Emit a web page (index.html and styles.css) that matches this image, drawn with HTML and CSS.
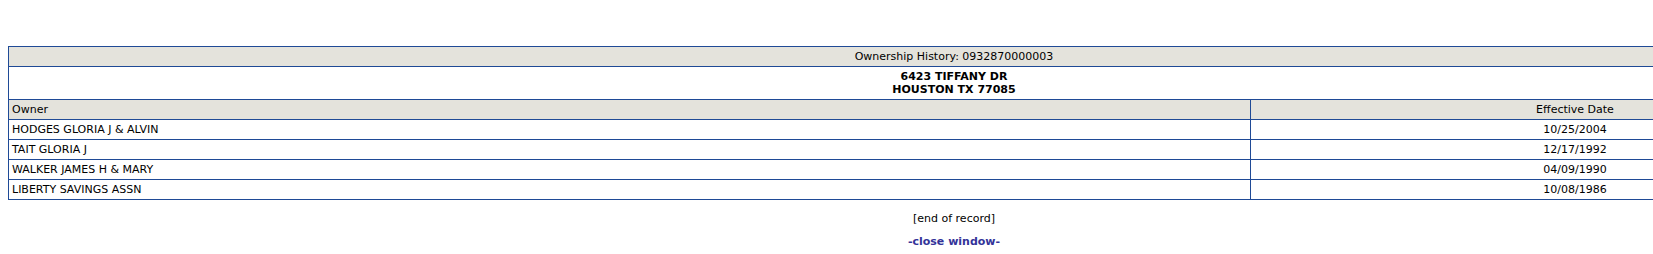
FILE: index.html
```html
<!DOCTYPE html>
<html>
<head>
<meta charset="utf-8">
<link rel="stylesheet" href="styles.css">
</head>
<body>
<div class="viewport">
<div class="page">
  <div class="spacer"></div>
  <table class="history">
    <tr><td colspan="2" class="title">Ownership History: 0932870000003</td></tr>
    <tr><td colspan="2" class="address">6423 TIFFANY DR<br>HOUSTON TX 77085</td></tr>
    <tr class="head"><td class="owner">Owner</td><td class="date">Effective Date</td></tr>
    <tr><td class="owner">HODGES GLORIA J &amp; ALVIN</td><td class="date">10/25/2004</td></tr>
    <tr><td class="owner">TAIT GLORIA J</td><td class="date">12/17/1992</td></tr>
    <tr><td class="owner">WALKER JAMES H &amp; MARY</td><td class="date">04/09/1990</td></tr>
    <tr><td class="owner">LIBERTY SAVINGS ASSN</td><td class="date">10/08/1986</td></tr>
  </table>
  <p class="end">[end of record]</p>
  <p class="close"><a href="#">-close window-</a></p>
</div>
</div>
</body>
</html>
```
FILE: styles.css
```css
html {
  overflow: hidden;
}
body {
  margin: 8px 0 8px 8px;
  font-family: "DejaVu Sans", Verdana, sans-serif;
  font-size: 11px;
  color: #000;
  background: #fff;
}
.viewport {
  width: calc(100vw - 8px);
  overflow: hidden;
}
.page {
  width: 1892px;
}
.spacer {
  height: 38px;
}
.history {
  width: 1892px;
  border-collapse: collapse;
}
.history td {
  border: 1px solid #1f4a96;
  padding: 0 3px;
  height: 19px;
  line-height: 13px;
}
.history .title {
  background: #e4e3dc;
  text-align: center;
}
.history .address {
  text-align: center;
  font-weight: bold;
  height: 32px;
}
.history .head td {
  background: #e4e3dc;
}
.history .owner {
  width: 1235px;
  text-align: left;
}
.history .date {
  text-align: center;
}
.end {
  text-align: center;
  margin: 12px 0 0 0;
  line-height: 13px;
}
.close {
  text-align: center;
  margin: 10px 0 0 0;
  line-height: 13px;
}
.close a {
  color: #333399;
  font-weight: bold;
  text-decoration: none;
}
```
